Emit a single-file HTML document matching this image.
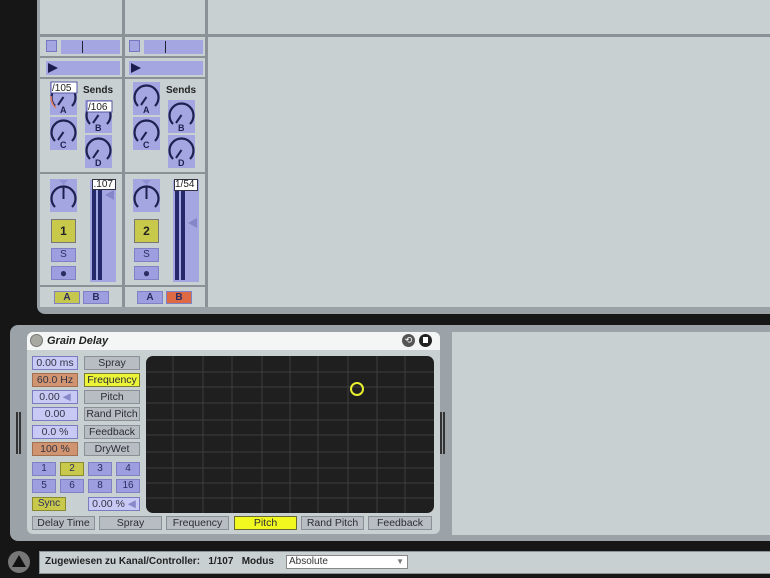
<!DOCTYPE html>
<html><head><meta charset="utf-8"><style>
*{margin:0;padding:0;box-sizing:border-box}
body{width:770px;height:578px;background:#161616;position:relative;overflow:hidden;font-family:"Liberation Sans",sans-serif}
.a{position:absolute}
.p{background:#a4a6e2}
.ln{background:#8a9297;position:absolute}
.vb{position:absolute;height:14px;border:1px solid #7a7cc0;background:#c8c9f4;font-size:10.5px;color:#334;text-align:center;line-height:12px}
.bt{position:absolute;height:14px;border:1px solid #8a9096;background:#b7bdc2;font-size:10.5px;color:#2c2c34;text-align:center;line-height:12px}
.nb{position:absolute;width:24px;height:14px;background:#9c9ee0;border:1px solid #7f81c4;font-size:10px;color:#2c2c60;text-align:center;line-height:12px}
.tab{position:absolute;top:516px;height:14px;border:1px solid #8a9096;background:#b7bdc2;font-size:10.5px;color:#2c2c34;text-align:center;line-height:12px}
</style></head><body>
<div class="a" style="left:37px;top:0;width:740px;height:314px;background:#9aa2a8;border-radius:0 0 0 8px"></div>
<div class="a" style="left:40px;top:0;width:730px;height:307px;background:#c9d0d2"></div>
<div class="ln" style="left:122px;top:0;width:3px;height:307px"></div>
<div class="ln" style="left:205px;top:0;width:3px;height:307px"></div>
<div class="ln" style="left:40px;top:34px;width:730px;height:3px"></div>
<div class="ln" style="left:40px;top:56px;width:166px;height:2px"></div>
<div class="ln" style="left:40px;top:77px;width:166px;height:2px"></div>
<div class="ln" style="left:40px;top:172px;width:166px;height:2px"></div>
<div class="ln" style="left:40px;top:285px;width:166px;height:2px"></div>

<div class="a p" style="left:46px;top:40px;width:11px;height:12px;border:1px solid #7577c0"></div>
<div class="a p" style="left:61px;top:40px;width:59px;height:14px"></div>
<div class="a" style="left:82px;top:41px;width:1px;height:12px;background:#223"></div>
<div class="a p" style="left:46px;top:61px;width:74px;height:14px"></div>
<div class="a" style="left:48px;top:63px;width:0;height:0;border-left:10px solid #1c1c50;border-top:5px solid transparent;border-bottom:5px solid transparent"></div>
<div class="a" style="left:129px;top:40px;width:11px;height:12px;border:1px solid #7577c0;background:#a4a6e2"></div>
<div class="a p" style="left:144px;top:40px;width:59px;height:14px"></div>
<div class="a" style="left:165px;top:41px;width:1px;height:12px;background:#223"></div>
<div class="a p" style="left:129px;top:61px;width:74px;height:14px"></div>
<div class="a" style="left:131px;top:63px;width:0;height:0;border-left:10px solid #1c1c50;border-top:5px solid transparent;border-bottom:5px solid transparent"></div>

<svg class="a" style="left:0;top:0" width="770" height="578">
<defs>
<g id="k"><rect x="0" y="0" width="27" height="33" fill="#a4a6e2"/><path d="M5 24 A12 12 0 1 1 22 24" fill="none" stroke="#1e2050" stroke-width="2.2"/><line x1="13.5" y1="15" x2="8" y2="23" stroke="#1e2050" stroke-width="2"/></g>
</defs>
<use href="#k" x="50" y="82"/><use href="#k" x="50" y="117"/><use href="#k" x="85" y="100"/><use href="#k" x="85" y="135"/>
<use href="#k" x="133" y="82"/><use href="#k" x="133" y="117"/><use href="#k" x="168" y="100"/><use href="#k" x="168" y="135"/>
<g font-family="Liberation Sans" font-size="9" font-weight="bold" fill="#1e2050">
<text x="60" y="113">A</text><text x="60" y="148">C</text><text x="95" y="131">B</text><text x="95" y="166">D</text>
<text x="143" y="113">A</text><text x="143" y="148">C</text><text x="178" y="131">B</text><text x="178" y="166">D</text>
</g>
<g font-family="Liberation Sans" font-size="10" font-weight="bold" fill="#222"><text x="83" y="93">Sends</text><text x="166" y="93">Sends</text></g>
<rect x="51" y="82" width="26" height="11" fill="#fff" stroke="#5557a0"/><text x="52" y="91" font-size="10" font-family="Liberation Sans" fill="#222">/105</text>
<path d="M51 96 Q51 104 56 108" stroke="#e08060" fill="none" stroke-width="1.5"/>
<rect x="87" y="101" width="25" height="11" fill="#fff" stroke="#5557a0"/><text x="88" y="110" font-size="10" font-family="Liberation Sans" fill="#222">/106</text>
<g id="pk"><rect x="50" y="179" width="27" height="33" fill="#a4a6e2"/><path d="M55 207 A12 12 0 1 1 72 207" fill="none" stroke="#1e2050" stroke-width="2.2"/><line x1="63.5" y1="187" x2="63.5" y2="199" stroke="#1e2050" stroke-width="2"/><path d="M59 180 L68 180 L63.5 185Z" fill="#8f91d4"/></g>
<use href="#pk" x="83" y="0"/>
</svg>
<div class="a p" style="left:90px;top:180px;width:26px;height:102px"></div>
<div class="a" style="left:92px;top:190px;width:4px;height:90px;background:#25286a"></div>
<div class="a" style="left:98px;top:190px;width:4px;height:90px;background:#25286a"></div>
<div class="a" style="left:92px;top:179px;width:24px;height:11px;background:#fff;border:1px solid #334;font-size:10px;line-height:9px;color:#222;text-align:right;padding-right:2px">.107</div>
<div class="a" style="left:105px;top:190px;border-right:9px solid #8486c8;border-top:5px solid transparent;border-bottom:5px solid transparent"></div>
<div class="a p" style="left:173px;top:180px;width:26px;height:102px"></div>
<div class="a" style="left:175px;top:190px;width:4px;height:90px;background:#25286a"></div>
<div class="a" style="left:181px;top:190px;width:4px;height:90px;background:#25286a"></div>
<div class="a" style="left:174px;top:179px;width:24px;height:12px;background:#fff;border:1px solid #334;font-size:10px;line-height:10px;color:#222">1/54</div>
<div class="a" style="left:188px;top:218px;border-right:9px solid #8486c8;border-top:5px solid transparent;border-bottom:5px solid transparent"></div>
<div class="a" style="left:51px;top:219px;width:25px;height:24px;background:#c8c84a;border:1px solid #777;font:bold 12px 'Liberation Sans';line-height:22px;text-align:center;color:#222">1</div>
<div class="a" style="left:134px;top:219px;width:25px;height:24px;background:#c8c84a;border:1px solid #777;font:bold 12px 'Liberation Sans';line-height:22px;text-align:center;color:#222">2</div>
<div class="nb" style="left:51px;top:248px;width:25px">S</div>
<div class="nb" style="left:51px;top:266px;width:25px;font-size:12px">●</div>
<div class="nb" style="left:134px;top:248px;width:25px">S</div>
<div class="nb" style="left:134px;top:266px;width:25px;font-size:12px">●</div>
<div class="nb" style="left:54px;top:291px;width:26px;height:13px;background:#c6c84e;font-weight:bold;line-height:11px">A</div>
<div class="nb" style="left:83px;top:291px;width:26px;height:13px;font-weight:bold;line-height:11px">B</div>
<div class="nb" style="left:137px;top:291px;width:26px;height:13px;font-weight:bold;line-height:11px">A</div>
<div class="nb" style="left:166px;top:291px;width:26px;height:13px;background:#dd6a44;font-weight:bold;line-height:11px">B</div>

<div class="a" style="left:10px;top:325px;width:770px;height:216px;background:#9ba3a9;border-radius:8px 0 0 8px"></div>
<div class="a" style="left:452px;top:332px;width:318px;height:203px;background:#c9d0d2"></div>
<div class="a" style="left:16px;top:412px;width:2px;height:42px;background:#333"></div>
<div class="a" style="left:19px;top:412px;width:2px;height:42px;background:#333"></div>
<div class="a" style="left:440px;top:412px;width:2px;height:42px;background:#333"></div>
<div class="a" style="left:443px;top:412px;width:2px;height:42px;background:#333"></div>
<div class="a" style="left:27px;top:332px;width:413px;height:202px;background:#c9d0d2;border-radius:6px"></div>
<div class="a" style="left:27px;top:332px;width:413px;height:18px;background:#f4f5f5;border-radius:6px 6px 0 0"></div>
<div class="a" style="left:30px;top:334px;width:13px;height:13px;border-radius:50%;background:#a8aaa2;border:1px solid #777"></div>
<div class="a" style="left:47px;top:333px;font:italic bold 11px 'Liberation Sans';color:#222;line-height:16px">Grain Delay</div>
<div class="a" style="left:402px;top:334px;width:13px;height:13px;border-radius:50%;background:#555;color:#fff;font-size:9px;text-align:center;line-height:13px">⟲</div>
<div class="a" style="left:419px;top:334px;width:13px;height:13px;border-radius:50%;background:#222"><div class="a" style="left:4px;top:3px;width:5px;height:6px;background:#fff"></div></div>

<div class="vb" style="left:32px;top:356px;width:46px">0.00 ms</div>
<div class="vb" style="left:32px;top:373px;width:46px;background:#d09470;border-color:#a07050">60.0 Hz</div>
<div class="vb" style="left:32px;top:390px;width:46px">0.00 <span style="color:#8789c8">◀</span></div>
<div class="vb" style="left:32px;top:407px;width:46px">0.00</div>
<div class="vb" style="left:32px;top:425px;width:46px">0.0 %</div>
<div class="vb" style="left:32px;top:442px;width:46px;background:#d09470;border-color:#a07050">100 %</div>
<div class="bt" style="left:84px;top:356px;width:56px">Spray</div>
<div class="bt" style="left:84px;top:373px;width:56px;background:#ecf43a;border-color:#7a7a30">Frequency</div>
<div class="bt" style="left:84px;top:390px;width:56px">Pitch</div>
<div class="bt" style="left:84px;top:407px;width:56px">Rand Pitch</div>
<div class="bt" style="left:84px;top:425px;width:56px">Feedback</div>
<div class="bt" style="left:84px;top:442px;width:56px">DryWet</div>
<div class="nb" style="left:32px;top:462px">1</div>
<div class="nb" style="left:60px;top:462px;background:#c8c84a;border-color:#8a8a30">2</div>
<div class="nb" style="left:88px;top:462px">3</div>
<div class="nb" style="left:116px;top:462px">4</div>
<div class="nb" style="left:32px;top:479px">5</div>
<div class="nb" style="left:60px;top:479px">6</div>
<div class="nb" style="left:88px;top:479px">8</div>
<div class="nb" style="left:116px;top:479px">16</div>
<div class="nb" style="left:32px;top:497px;width:34px;background:#c8c84a;border-color:#8a8a30">Sync</div>
<div class="vb" style="left:88px;top:497px;width:52px">0.00 % <span style="color:#8789c8">◀</span></div>
<svg class="a" style="left:146px;top:356px" width="288" height="157">
<rect width="288" height="157" rx="7" fill="#1f1f1f"/>
<g stroke="#3e3e3e" stroke-width="1">
<path d="M27 0V157M57 0V157M86 0V157M116 0V157M144 0V157M172 0V157M202 0V157M231 0V157M259 0V157"/>
<path d="M0 16H288M0 31H288M0 47H288M0 64H288M0 79H288M0 96H288M0 112H288M0 127H288M0 142H288"/>
</g>
<circle cx="211" cy="33" r="6" fill="none" stroke="#e8ef30" stroke-width="2"/>
</svg>
<div class="tab" style="left:32px;width:63px">Delay Time</div>
<div class="tab" style="left:99px;width:63px">Spray</div>
<div class="tab" style="left:166px;width:63px">Frequency</div>
<div class="tab" style="left:234px;width:63px;background:#f0f820;border-color:#6a6a30">Pitch</div>
<div class="tab" style="left:301px;width:63px">Rand Pitch</div>
<div class="tab" style="left:368px;width:64px">Feedback</div>

<div class="a" style="left:8px;top:551px;width:22px;height:22px;border-radius:50%;background:#777"><div class="a" style="left:4px;top:4px;border-bottom:12px solid #111;border-left:7px solid transparent;border-right:7px solid transparent"></div></div>
<div class="a" style="left:39px;top:551px;width:740px;height:23px;background:#c9d0d2;border:1px solid #8a9297"></div>
<div class="a" style="left:45px;top:555px;font:bold 10px 'Liberation Sans';color:#222;line-height:14px;white-space:nowrap">Zugewiesen zu Kanal/Controller:&nbsp;&nbsp; 1/107&nbsp;&nbsp; Modus</div>
<div class="a" style="left:286px;top:555px;width:122px;height:14px;background:#fff;border:1px solid #888;font-size:10px;color:#333;line-height:12px;padding-left:2px">Absolute<span style="position:absolute;right:3px;color:#777;font-size:8px">▼</span></div>
</body></html>
